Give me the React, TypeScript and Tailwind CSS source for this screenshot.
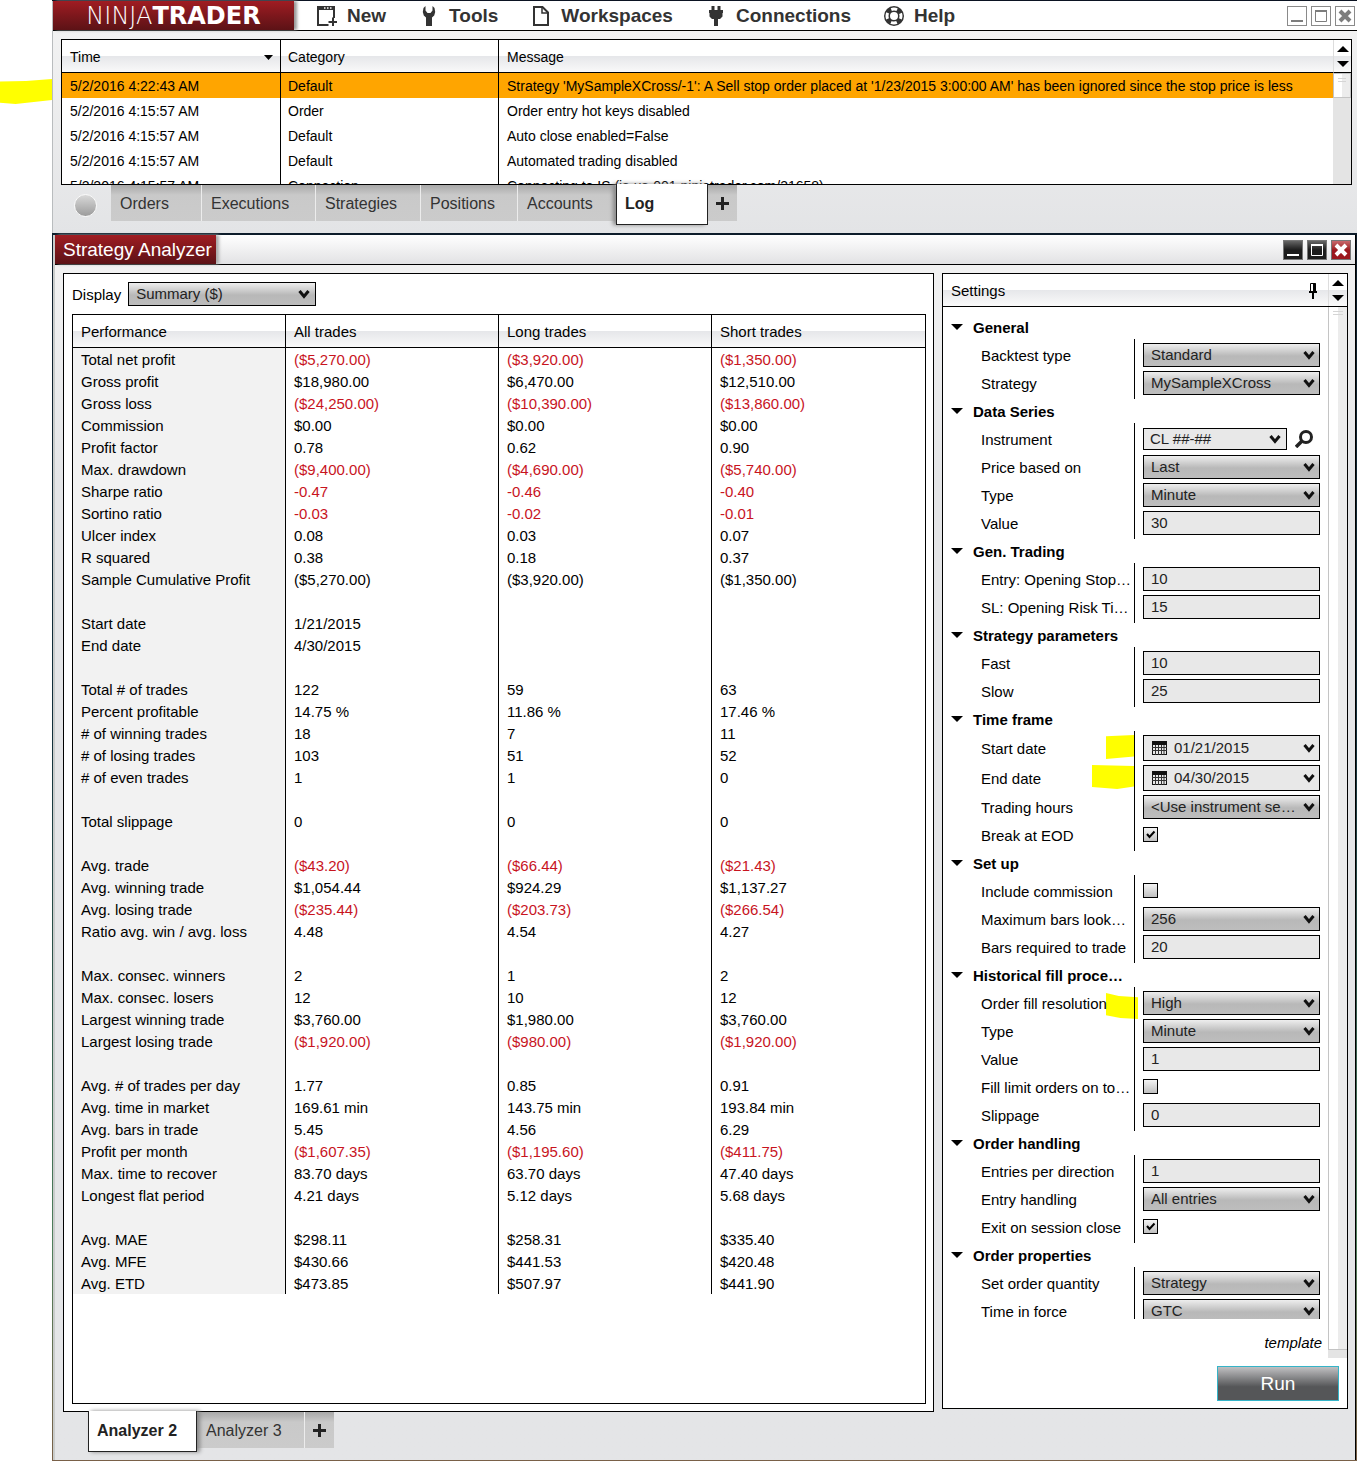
import React from 'react';

type Row = [string, string?, string?, string?];

type Field = {
  label: string;
  kind: 'select' | 'text' | 'date' | 'check' | 'instrument';
  value?: string;
  checked?: boolean;
  mark?: 'start' | 'end' | 'fill';
};

type Group = { title: string; fields: Field[] };

const logRows = [
  ['5/2/2016 4:22:43 AM', 'Default', "Strategy 'MySampleXCross/-1': A Sell stop order placed at '1/23/2015 3:00:00 AM' has been ignored since the stop price is less"],
  ['5/2/2016 4:15:57 AM', 'Order', 'Order entry hot keys disabled'],
  ['5/2/2016 4:15:57 AM', 'Default', 'Auto close enabled=False'],
  ['5/2/2016 4:15:57 AM', 'Default', 'Automated trading disabled'],
  ['5/2/2016 4:15:57 AM', 'Connection', 'Connecting to IS (is-us-001.ninjatrader.com/31658)'],
];

const performance: Row[] = [
  ['Total net profit', '($5,270.00)', '($3,920.00)', '($1,350.00)'],
  ['Gross profit', '$18,980.00', '$6,470.00', '$12,510.00'],
  ['Gross loss', '($24,250.00)', '($10,390.00)', '($13,860.00)'],
  ['Commission', '$0.00', '$0.00', '$0.00'],
  ['Profit factor', '0.78', '0.62', '0.90'],
  ['Max. drawdown', '($9,400.00)', '($4,690.00)', '($5,740.00)'],
  ['Sharpe ratio', '-0.47', '-0.46', '-0.40'],
  ['Sortino ratio', '-0.03', '-0.02', '-0.01'],
  ['Ulcer index', '0.08', '0.03', '0.07'],
  ['R squared', '0.38', '0.18', '0.37'],
  ['Sample Cumulative Profit', '($5,270.00)', '($3,920.00)', '($1,350.00)'],
  [''],
  ['Start date', '1/21/2015'],
  ['End date', '4/30/2015'],
  [''],
  ['Total # of trades', '122', '59', '63'],
  ['Percent profitable', '14.75 %', '11.86 %', '17.46 %'],
  ['# of winning trades', '18', '7', '11'],
  ['# of losing trades', '103', '51', '52'],
  ['# of even trades', '1', '1', '0'],
  [''],
  ['Total slippage', '0', '0', '0'],
  [''],
  ['Avg. trade', '($43.20)', '($66.44)', '($21.43)'],
  ['Avg. winning trade', '$1,054.44', '$924.29', '$1,137.27'],
  ['Avg. losing trade', '($235.44)', '($203.73)', '($266.54)'],
  ['Ratio avg. win / avg. loss', '4.48', '4.54', '4.27'],
  [''],
  ['Max. consec. winners', '2', '1', '2'],
  ['Max. consec. losers', '12', '10', '12'],
  ['Largest winning trade', '$3,760.00', '$1,980.00', '$3,760.00'],
  ['Largest losing trade', '($1,920.00)', '($980.00)', '($1,920.00)'],
  [''],
  ['Avg. # of trades per day', '1.77', '0.85', '0.91'],
  ['Avg. time in market', '169.61 min', '143.75 min', '193.84 min'],
  ['Avg. bars in trade', '5.45', '4.56', '6.29'],
  ['Profit per month', '($1,607.35)', '($1,195.60)', '($411.75)'],
  ['Max. time to recover', '83.70 days', '63.70 days', '47.40 days'],
  ['Longest flat period', '4.21 days', '5.12 days', '5.68 days'],
  [''],
  ['Avg. MAE', '$298.11', '$258.31', '$335.40'],
  ['Avg. MFE', '$430.66', '$441.53', '$420.48'],
  ['Avg. ETD', '$473.85', '$507.97', '$441.90'],
];

const groups: Group[] = [
  {
    title: 'General',
    fields: [
      { label: 'Backtest type', kind: 'select', value: 'Standard' },
      { label: 'Strategy', kind: 'select', value: 'MySampleXCross' },
    ],
  },
  {
    title: 'Data Series',
    fields: [
      { label: 'Instrument', kind: 'instrument', value: 'CL ##-##' },
      { label: 'Price based on', kind: 'select', value: 'Last' },
      { label: 'Type', kind: 'select', value: 'Minute' },
      { label: 'Value', kind: 'text', value: '30' },
    ],
  },
  {
    title: 'Gen. Trading',
    fields: [
      { label: 'Entry: Opening Stop…', kind: 'text', value: '10' },
      { label: 'SL: Opening Risk Ti…', kind: 'text', value: '15' },
    ],
  },
  {
    title: 'Strategy parameters',
    fields: [
      { label: 'Fast', kind: 'text', value: '10' },
      { label: 'Slow', kind: 'text', value: '25' },
    ],
  },
  {
    title: 'Time frame',
    fields: [
      { label: 'Start date', kind: 'date', value: '01/21/2015', mark: 'start' },
      { label: 'End date', kind: 'date', value: '04/30/2015', mark: 'end' },
      { label: 'Trading hours', kind: 'select', value: '<Use instrument se…' },
      { label: 'Break at EOD', kind: 'check', checked: true },
    ],
  },
  {
    title: 'Set up',
    fields: [
      { label: 'Include commission', kind: 'check' },
      { label: 'Maximum bars look…', kind: 'select', value: '256' },
      { label: 'Bars required to trade', kind: 'text', value: '20' },
    ],
  },
  {
    title: 'Historical fill proce…',
    fields: [
      { label: 'Order fill resolution', kind: 'select', value: 'High', mark: 'fill' },
      { label: 'Type', kind: 'select', value: 'Minute' },
      { label: 'Value', kind: 'text', value: '1' },
      { label: 'Fill limit orders on to…', kind: 'check' },
      { label: 'Slippage', kind: 'text', value: '0' },
    ],
  },
  {
    title: 'Order handling',
    fields: [
      { label: 'Entries per direction', kind: 'text', value: '1' },
      { label: 'Entry handling', kind: 'select', value: 'All entries' },
      { label: 'Exit on session close', kind: 'check', checked: true },
    ],
  },
  {
    title: 'Order properties',
    fields: [
      { label: 'Set order quantity', kind: 'select', value: 'Strategy' },
      { label: 'Time in force', kind: 'select', value: 'GTC' },
    ],
  },
];

const NewIcon = () => (
  <svg viewBox="0 0 20 20" className="w-5 h-5">
    <path d="M11.500 19H1V1h16v11" fill="none" stroke="#333" strokeWidth="2" />
    <path d="M0 0h18v4H0z" fill="#333" />
    <path d="M7 2h1.500M10 2h1.500M13 2h1.500" stroke="#fff" strokeWidth="1.500" />
    <path d="M16 11.500V20M11.500 16H20" stroke="#333" strokeWidth="2" />
  </svg>
);

const ToolsIcon = () => (
  <svg viewBox="0 0 20 20" className="w-5 h-5">
    <path d="M6.500 0 4.500 2 3.800 6l1 3.500L7 11.500V20h6v-8.500l2.200-2L16.200 6l-.7-4-2-2v4.500L11.500 7h-3L6.500 4.500z" fill="#333" />
  </svg>
);

const PageIcon = () => (
  <svg viewBox="0 0 20 20" className="w-5 h-5">
    <path d="M3 1h8.500L17 6.500V19H3z" fill="none" stroke="#333" strokeWidth="2" />
    <path d="M11 1v6h6" fill="none" stroke="#333" strokeWidth="1.500" />
  </svg>
);

const PlugIcon = () => (
  <svg viewBox="0 0 20 20" className="w-5 h-5">
    <path d="M5.500 0h3v4h3V0h3v4H17v3h-.5v3.500L14 13h-2v7H8v-7H6l-2.500-2.500V7H3V4h2.500z" fill="#333" />
  </svg>
);

const HelpIcon = () => (
  <svg viewBox="0 0 20 20" className="w-5 h-5">
    <circle cx="10" cy="10" r="7" fill="none" stroke="#333" strokeWidth="6" />
    <circle cx="10" cy="10" r="7" fill="none" stroke="#fff" strokeWidth="3" strokeDasharray="6 5" strokeDashoffset="3" />
  </svg>
);

const Chevron = ({ className }: { className: string }) => (
  <svg viewBox="0 0 12 9" className={className}>
    <path d="M1.500 1 6 6.500 10.500 1" fill="none" stroke="#111" strokeWidth="3" />
  </svg>
);

const CalendarIcon = () => (
  <svg viewBox="0 0 15 14" className="w-[15px] h-3.5 shrink-0">
    <path d="M0 0h15v4H0zM0 0h1v14H0zM14 0h1v14h-1zM0 13h15v1H0z" fill="#111" />
    <path d="M0 6.500h15M0 9.500h15M3.500 4v10M6.500 4v10M9.500 4v10M12 4v10" stroke="#333" />
  </svg>
);

const SearchIcon = () => (
  <svg viewBox="0 0 18 18" className="w-[18px] h-[18px]">
    <circle cx="11" cy="7" r="5.500" fill="none" stroke="#222" strokeWidth="3" />
    <path d="M7 11 1 17" stroke="#222" strokeWidth="3.500" />
  </svg>
);

const PinIcon = () => (
  <svg viewBox="0 0 8 16" className="w-2 h-4">
    <path d="M1.500.5h5v8h-5z" fill="#fff" stroke="#000" />
    <path d="M4 .5h3v8H4zM0 8h8v2H0zM3 10h2v6H3z" fill="#000" />
  </svg>
);

const Arrow = ({ up }: { up?: boolean }) => (
  <svg viewBox="0 0 12 6" className="w-3 h-1.5">
    <path d={up ? 'M6 0 12 6H0z' : 'M0 0h12L6 6z'} fill="#000" />
  </svg>
);

const PlusIcon = () => (
  <svg viewBox="0 0 13 13" className="w-[13px] h-[13px]">
    <path d="M6.500 0v13M0 6.500h13" stroke="#222" strokeWidth="3" />
  </svg>
);

const WindowGlyph = ({ name }: { name: string }) => (
  <svg viewBox="0 0 18 18" className="w-[18px] h-[18px]" stroke="currentColor" fill="none">
    {name === 'Minimize' && <path d="M3 14h12" strokeWidth="2" />}
    {name === 'Maximize' && (
      <>
        <path d="M3.500 4.500h11v10h-11z" />
        <path d="M3 4h12" strokeWidth="2" />
      </>
    )}
    {name === 'Close' && <path d="m4 4 10 10M14 4 4 14" strokeWidth="4" />}
  </svg>
);

const windowButtons = ['Minimize', 'Maximize', 'Close'];

const menu = [
  { label: 'New', icon: <NewIcon /> },
  { label: 'Tools', icon: <ToolsIcon /> },
  { label: 'Workspaces', icon: <PageIcon /> },
  { label: 'Connections', icon: <PlugIcon /> },
  { label: 'Help', icon: <HelpIcon /> },
];

const tabs = [
  { label: 'Orders', width: 'w-[91px]' },
  { label: 'Executions', width: 'w-[114px]' },
  { label: 'Strategies', width: 'w-[105px]' },
  { label: 'Positions', width: 'w-[97px]' },
  { label: 'Accounts', width: 'w-[98px]' },
];

const headBg = 'bg-[linear-gradient(to_bottom,#ffffff_50%,#e6e7ea_50%,#fafafa_100%)]';
const tabBg = 'bg-[linear-gradient(to_bottom,#a8a8a8_0px,#c9c9c9_10px,#cbcbcb_100%)]';
const controlBg = 'bg-[linear-gradient(to_bottom,#eeeeee_0%,#b8b8b8_55%,#bdbdbd_100%)]';

const markShape = {
  start: 'right-0 top-0 w-7 h-6 [clip-path:polygon(0_5%,100%_0,100%_90%,0_100%)]',
  end: 'right-0 top-0 w-[42px] h-6 [clip-path:polygon(0_0,100%_4%,100%_90%,60%_100%,0_92%)]',
  fill: '-right-1 top-0.5 w-8 h-[26px] [clip-path:polygon(0_0,40%_12%,100%_16%,100%_100%,45%_96%,0_86%)]',
};

const TabButton = ({ label, width }: { label: string; width: string }) => (
  <button className={`${width} ${tabBg} h-9 pl-[9px] pt-px text-left text-base text-[#333] border-r border-r-[#ececec]`}>{label}</button>
);

const AddTab = () => (
  <button aria-label="Add tab" className={`${tabBg} w-[29px] h-9 flex items-center justify-center`}>
    <PlusIcon />
  </button>
);

const Control = ({ field, id }: { field: Field; id: string }) => {
  if (field.kind === 'check') {
    return (
      <div className="h-6 pt-1">
        <span className="relative flex">
          <input id={id} type="checkbox" defaultChecked={field.checked} className="peer appearance-none w-[15px] h-[15px] border border-black bg-linear-to-b from-[#f4f4f4] to-[#c0c0c0]" />
          <svg viewBox="0 0 15 15" className="absolute left-0 top-0 w-[15px] h-[15px] pointer-events-none hidden peer-checked:block">
            <path d="m4 7 2.500 3L11.500 4.500" fill="none" stroke="#000" strokeWidth="2" />
          </svg>
        </span>
      </div>
    );
  }
  if (field.kind === 'text') {
    return <input id={id} type="text" defaultValue={field.value} className="w-full h-6 pl-[7px] pb-px border border-black bg-[#e8e8e8] text-[#222]" />;
  }
  if (field.kind === 'date') {
    return (
      <div className="relative h-[26px] flex items-center border border-black bg-[#e8e8e8] pl-2">
        <CalendarIcon />
        <input id={id} type="text" defaultValue={field.value} className="w-full min-w-0 pl-[7px] text-[#222]" />
        <Chevron className="absolute right-1 top-2 w-3 h-[9px]" />
      </div>
    );
  }
  if (field.kind === 'instrument') {
    return (
      <div className="h-6 flex items-center gap-2">
        <div className="relative w-36">
          <select id={id} className="block appearance-none w-full h-[22px] pl-1.5 border border-black bg-[#e8e8e8] text-[#222]">
            <option>{field.value}</option>
          </select>
          <Chevron className="absolute right-1.5 top-[7px] w-3 h-[9px] pointer-events-none" />
        </div>
        <button aria-label="Find instrument"><SearchIcon /></button>
      </div>
    );
  }
  return (
    <div className="relative">
      <select id={id} className={`block appearance-none w-full h-6 pl-[7px] border border-black text-[#222] ${controlBg}`}>
        <option>{field.value}</option>
      </select>
      <Chevron className="absolute right-[5px] top-2 w-3 h-[9px] pointer-events-none" />
    </div>
  );
};

const SettingsGroup = ({ group, index }: { group: Group; index: number }) => (
  <section>
    <h3 className="h-6 flex items-center gap-2.5 pl-2 font-bold">
      <Arrow />
      <span className="pt-0.5">{group.title}</span>
    </h3>
    <div className="flex pl-[38px] pr-2">
      <div className="flex-1 min-w-0 flex flex-col gap-1 py-1">
        {group.fields.map((field, i) => (
          <div key={i} className={`relative flex items-center ${field.kind === 'date' ? 'h-[26px]' : 'h-6'}`}>
            {field.mark && <span className={`absolute bg-[#ffff00] ${markShape[field.mark]}`} />}
            <label htmlFor={`f${index}-${i}`} className="relative pt-0.5 whitespace-nowrap">{field.label}</label>
          </div>
        ))}
      </div>
      <div className="relative w-px bg-black" />
      <div className="w-[177px] ml-2 flex flex-col gap-1 py-1">
        {group.fields.map((field, i) => (
          <Control key={i} field={field} id={`f${index}-${i}`} />
        ))}
      </div>
    </div>
  </section>
);

const LogWindow = () => (
  <section className="border-l border-[#b9bcbe] bg-linear-to-b from-[#f4f4f4] to-[#e3e4e6] h-[232px]">
    <header className="h-[30px] bg-white border-b border-black flex items-center">
      <h1 className="w-[241px] h-full flex items-center justify-center bg-linear-to-b from-[#a01c22] to-[#5c1216] text-white text-2xl leading-none font-['DejaVu_Sans'] shadow-[3px_0_3px_#999]">
        <span className="font-extralight">NINJA</span>
        <span className="font-bold">TRADER</span>
      </h1>
      <nav className="flex gap-[33px] ml-[23px]">
        {menu.map((m) => (
          <button key={m.label} className="flex items-center gap-2.5 text-[19px] leading-5 font-bold text-[#333]">
            {m.icon}
            {m.label}
          </button>
        ))}
      </nav>
      <div className="ml-auto mr-0.5 flex gap-1 text-[#7d7d7d]">
        {windowButtons.map((name) => (
          <button key={name} aria-label={name} className="w-5 h-5 border border-[#8a8a8a] bg-white"><WindowGlyph name={name} /></button>
        ))}
      </div>
    </header>

    <div className="mx-2 mt-2 mr-[5px] h-[146px] border border-black bg-white flex overflow-hidden text-sm leading-5">
      <div className="flex-1 min-w-0 overflow-hidden">
        <table className="w-full table-fixed border-separate border-spacing-0 whitespace-nowrap">
          <colgroup>
            <col className="w-[219px]" />
            <col className="w-[218px]" />
            <col />
          </colgroup>
          <thead>
            <tr className={`h-[33px] text-left ${headBg}`}>
              <th className="font-normal pt-0.5 pl-2 pr-[7px] border-b border-r border-black">
                <div className="flex items-center justify-between">
                  Time
                  <svg viewBox="0 0 9 5" className="w-[9px] h-[5px]"><path d="M0 0h9L4.500 5z" /></svg>
                </div>
              </th>
              <th className="font-normal pt-0.5 pl-[7px] border-b border-r border-black">Category</th>
              <th className="font-normal pt-0.5 pl-2 border-b border-black">Message</th>
            </tr>
          </thead>
          <tbody>
            {logRows.map((r, i) => (
              <tr key={i} className={i === 0 ? 'h-[25px] bg-[#ffa500]' : 'h-[25px]'}>
                <td className="pl-2 border-r border-black">{r[0]}</td>
                <td className="pl-[7px] border-r border-black">{r[1]}</td>
                <td className="pl-2">{r[2]}</td>
              </tr>
            ))}
          </tbody>
        </table>
      </div>
      <div className="w-[18px] flex flex-col bg-[#e4e4e4]">
        <div className={`h-[33px] border-b border-black border-l border-l-[#ddd] flex flex-col items-center justify-center gap-[9px] ${headBg}`}>
          <Arrow up />
          <Arrow />
        </div>
        <div className="h-[25px] border border-[#c4c4c4] bg-linear-to-r from-white from-50% to-[#ececec] to-50% pt-1 px-1">
          <div className="h-1 border-y border-[#d5d5d5]" />
        </div>
      </div>
    </div>

    <div className="flex items-start pl-[21px]">
      <div className="w-[23px] h-[23px] mt-[9px] mr-3.5 rounded-full border border-[#fafafa] bg-linear-to-b from-[#d9d9d9] to-[#9c9c9c]" />
      {tabs.map((t) => <TabButton key={t.label} {...t} />)}
      <button className="relative -mt-px w-[92px] h-[41px] pl-2 text-left text-base font-bold text-[#222] bg-white border border-t-0 border-[#222] shadow-[-3px_0_4px_#888]">Log</button>
      <AddTab />
    </div>
  </section>
);

const PerformancePanel = () => (
  <div className="flex-1 min-w-0 border border-black bg-white pl-2 pr-[7px] pt-2 pb-[7px] flex flex-col">
    <div className="flex items-center gap-[7px]">
      <label htmlFor="display" className="pt-0.5">Display</label>
      <div className="relative w-[188px]">
        <select id="display" className={`block appearance-none w-full h-6 pl-[7px] border border-black text-[#222] ${controlBg}`}>
          <option>Summary ($)</option>
        </select>
        <Chevron className="absolute right-1.5 top-2 w-3 h-[9px] pointer-events-none" />
      </div>
    </div>
    <div className="mt-2 flex-1 border border-black">
      <table className="w-full table-fixed border-separate border-spacing-0">
        <colgroup>
          <col className="w-1/4" />
          <col className="w-1/4" />
          <col className="w-1/4" />
          <col className="w-1/4" />
        </colgroup>
        <thead>
          <tr className={`h-[33px] text-left ${headBg}`}>
            {['Performance', 'All trades', 'Long trades', 'Short trades'].map((h) => (
              <th key={h} className="font-normal pl-2 pt-0.5 border-b border-r border-black last:border-r-0">{h}</th>
            ))}
          </tr>
        </thead>
        <tbody>
          {performance.map((row, i) => (
            <tr key={i} className="h-[22px] leading-5">
              <td className="pl-2 pt-0.5 pb-0 bg-[#f2f2f2] border-r border-black">{row[0]}</td>
              {[1, 2, 3].map((c) => {
                const value = row[c] ?? '';
                // the custom metric is never coloured, even when negative
                const loss = /^[(-]/.test(value) && row[0] !== 'Sample Cumulative Profit';
                return (
                  <td key={c} className={`pl-2 pt-0.5 pb-0 border-r border-black last:border-r-0 ${loss ? 'text-[#c8141e]' : ''}`}>{value}</td>
                );
              })}
            </tr>
          ))}
        </tbody>
      </table>
    </div>
  </div>
);

const SettingsPanel = () => (
  <aside className="w-[406px] mb-[3px] border border-black bg-white">
    <div className={`h-[33px] flex border-b border-black ${headBg}`}>
      <h2 className="flex-1 flex items-center justify-between pl-2 pr-[11px] pt-px">
        Settings
        <PinIcon />
      </h2>
      <div className="w-[19px] border-l border-[#ddd] flex flex-col items-center justify-center gap-[9px]">
        <Arrow up />
        <Arrow />
      </div>
    </div>
    <div className="flex">
      <div className="flex-1 min-w-0">
        <div className="h-[1012px] pt-2 overflow-hidden">
          {groups.map((g, i) => <SettingsGroup key={g.title} group={g} index={i} />)}
        </div>
        <div className="h-[39px] flex items-center justify-end pt-2 pr-1.5">
          <a href="#template" className="italic">template</a>
        </div>
      </div>
      <div className="w-[19px] bg-[#e4e4e4] pb-2">
        <div className="h-full border-l border-b border-[#c4c4c4] bg-linear-to-r from-white from-50% to-[#ececec] to-50% pt-1 px-1">
          <div className="h-1 border-y border-[#d5d5d5]" />
        </div>
      </div>
    </div>
    <div className="flex justify-end pt-2 pr-2 pb-[7px]">
      <button className="w-[122px] h-[35px] border border-[#35b4c8] bg-[linear-gradient(to_bottom,#c0c0c2_0%,#555658_60%,#555658_100%)] text-white text-[19px] leading-6">Run</button>
    </div>
  </aside>
);

const AnalyzerWindow = () => (
  <section className="flex-1 ml-px mr-px border-l-2 border-l-[#c9cccb] border-r border-r-black bg-linear-to-b from-[#f3f3f3] to-[#e4e5e7] to-20%">
    <header className="h-[30px] flex items-center border-b border-black bg-linear-to-b from-white to-[#e2e2e4]">
      <h2 className="h-full w-[161px] flex items-center pl-2 bg-linear-to-b from-[#a01c22] to-[#5c1216] text-white text-[19px] shadow-[3px_0_3px_#aaa]">Strategy Analyzer</h2>
      <div className="ml-auto mr-1 flex gap-1 text-white">
        {windowButtons.map((name) => (
          <button key={name} aria-label={name} className={`w-5 h-5 border border-[#777] bg-linear-to-b ${name === 'Close' ? 'from-[#c8686c] to-[#9c181e]' : 'from-[#666] to-[#1c1c1c]'} to-50%`}><WindowGlyph name={name} /></button>
        ))}
      </div>
    </header>
    <div className="flex gap-2 px-2 pt-2 pr-[7px]">
      <PerformancePanel />
      <SettingsPanel />
    </div>
    <div className="flex items-start pl-[33px] pb-2">
      <button className="relative z-10 -mt-px w-[109px] h-[41px] pl-2 text-left text-base font-bold text-[#222] bg-white border border-t-0 border-[#222] shadow-[3px_0_4px_#888]">Analyzer 2</button>
      <TabButton label="Analyzer 3" width="w-[108px]" />
      <AddTab />
    </div>
  </section>
);

const App: React.FC = () => {
  return (
    <div className="relative min-h-screen bg-white pl-[52px] flex text-[15px] leading-5 text-black font-['Liberation_Sans',sans-serif]">
      <div className="absolute left-0 top-[79px] w-[52px] h-[25px] bg-[#ffff00] [clip-path:polygon(0_10%,50%_8%,100%_0,100%_84%,30%_100%,0_95%)]" />
      <div className="flex-1 min-w-0 flex flex-col gap-0.5 pt-px pb-0.5 bg-[linear-gradient(to_bottom,#0b1322_0%,#12303c_50%,#4f7f5c_85%,#7a6048_100%)]">
        <LogWindow />
        <AnalyzerWindow />
      </div>
    </div>
  );
};

export default App;
